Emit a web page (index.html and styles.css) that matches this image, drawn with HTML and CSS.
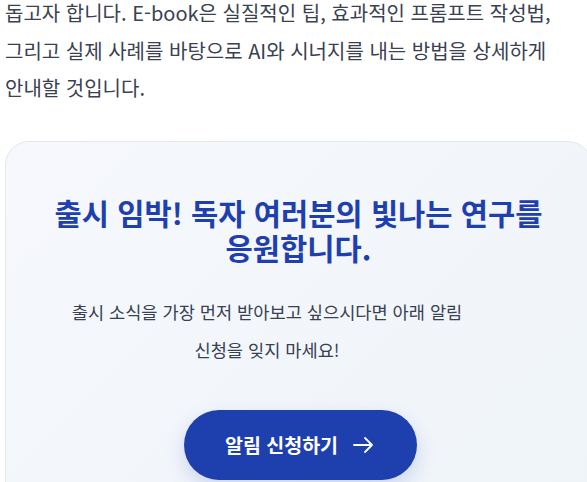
FILE: index.html
```html
<!DOCTYPE html>
<html lang="ko">
<head>
<meta charset="utf-8">
<link rel="stylesheet" href="styles.css">
</head>
<body>
<main class="page">
  <p class="intro">돕고자 합니다. E-book은 실질적인 팁, 효과적인 프롬프트 작성법, 그리고 실제 사례를 바탕으로 AI와 시너지를 내는 방법을 상세하게 안내할 것입니다.</p>
  <section class="notify-card">
    <h2 class="notify-title">출시 임박! 독자 여러분의 빛나는 연구를 응원합니다.</h2>
    <p class="notify-text">출시 소식을 가장 먼저 받아보고 싶으시다면 아래 알림 신청을 잊지 마세요!</p>
    <a class="notify-btn" href="#">알림 신청하기
      <svg class="arrow" viewBox="0 0 24 24" width="24" height="24" fill="none" stroke="currentColor" stroke-width="1.8" stroke-linecap="round" stroke-linejoin="round"><path d="M3 12h18M14 5l7 7-7 7"/></svg>
    </a>
  </section>
</main>
</body>
</html>
```
FILE: styles.css
```css
html, body {
  margin: 0;
  padding: 0;
  background: #ffffff;
  overflow: hidden;
}
body {
  font-family: "Noto Sans CJK KR", "Noto Sans", sans-serif;
  color: #374151;
  word-break: keep-all;
}
.page {
  padding-left: 5px;
  margin-top: -6px;
  width: 587px;
}
.intro {
  margin: 0;
  max-width: 546px;
  font-size: 20px;
  line-height: 37.5px;
  color: #3a4150;
}
.notify-card {
  margin-top: 34px;
  box-sizing: border-box;
  width: 587px;
  border: 1px solid #e3e8f0;
  border-radius: 24px;
  background: linear-gradient(135deg, #f6f8fd 0%, #eff4f9 100%);
  padding: 53px 40px 40px;
  display: flex;
  flex-direction: column;
  align-items: center;
}
.notify-title {
  margin: 0;
  font-size: 29.6px;
  line-height: 35px;
  font-weight: 700;
  color: #1e40af;
  text-align: center;
}
.notify-text {
  margin: 28px 0 0;
  align-self: flex-start;
  width: 442px;
  font-size: 17.6px;
  line-height: 38px;
  color: #374151;
  text-align: center;
}
.notify-btn {
  margin: 41px 0 0 4px;
  display: inline-flex;
  align-items: center;
  gap: 13px;
  height: 70px;
  box-sizing: border-box;
  padding: 0 42px 0 41px;
  border-radius: 999px;
  background: #1e40af;
  color: #ffffff;
  font-size: 19.5px;
  font-weight: 700;
  text-decoration: none;
  box-shadow: 0 8px 20px rgba(30, 64, 175, 0.18);
}
.arrow {
  display: block;
}
```
